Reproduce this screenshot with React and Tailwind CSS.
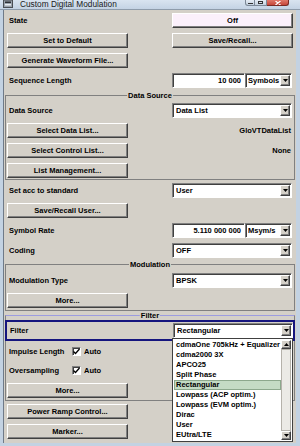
import React from 'react'

const raised = 'border border-t-white border-l-white border-r-[#404040] border-b-[#404040] shadow-[inset_-1px_-1px_0_#808080]'
const sunken = 'border border-t-[#808080] border-l-[#808080] border-r-white border-b-white shadow-[inset_1px_1px_0_#404040]'

function Btn({ children, pink }) {
  return (
    <div className={`w-[121px] h-[15px] flex items-center justify-center ${pink ? 'bg-[#fbf0fb]' : 'bg-[#d4d0c8]'} ${raised}`}>
      {children}
    </div>
  )
}

function Arrow({ up }) {
  return (
    <svg width="5" height="3" viewBox="0 0 5 3">
      <path d={up ? 'M2.5 0L5 3H0z' : 'M0 0h5L2.5 3z'} fill="#000" />
    </svg>
  )
}

function Select({ value, w = 'w-[120px]', pad = 'pl-[3px]' }) {
  return (
    <div className={`${w} h-[15px] bg-white ${sunken} flex items-center ${pad} pr-[1px]`}>
      <span className="flex-1 whitespace-nowrap overflow-hidden">{value}</span>
      <div className={`w-[10px] h-[11px] shrink-0 bg-[#d4d0c8] ${raised} flex items-center justify-center`}>
        <Arrow />
      </div>
    </div>
  )
}

function Field({ value, unit }) {
  return (
    <div className="flex w-[120px] h-[15px]">
      <div className={`w-[73px] h-full bg-white ${sunken} flex items-center justify-end pr-[3px]`}>{value}</div>
      <Select value={unit} w="w-[47px]" pad="pl-[2px]" />
    </div>
  )
}

function Row({ left, right, className = '' }) {
  return (
    <div className={`flex h-[15px] items-center ${className}`}>
      <div className="w-[165px] h-full flex items-center">{left}</div>
      {right}
    </div>
  )
}

const Label = ({ children }) => <span className="pl-[2px] leading-none">{children}</span>

function Group({ title, children, className = '', top = 'border-t-[#808080]' }) {
  return (
    <div className={`relative border border-[#808080] ${top} ${className}`}>
      <span className="absolute left-1/2 -translate-x-1/2 -top-[5px] bg-[#d4d0c8] px-[1px] leading-[9px]">{title}</span>
      {children}
    </div>
  )
}

function Check({ label }) {
  return (
    <div className="flex items-center">
      <div className={`w-[9px] h-[9px] bg-white ${sunken} flex items-center justify-center`}>
        <svg width="7" height="7" viewBox="0 0 7 7">
          <path d="M0.5 3.5L2.5 5.5L6.5 1" fill="none" stroke="#000" strokeWidth="1.3" />
        </svg>
      </div>
      <span className="ml-[3px]">{label}</span>
    </div>
  )
}

function TitleBar() {
  return (
    <div className="h-[10px] flex items-start bg-gradient-to-b from-[#d9e4f0] to-[#c4d3e4] border-b border-[#8e9cab]">
      <svg className="ml-[3px]" width="10" height="8" viewBox="0 0 10 8">
        <rect x="0.5" y="0" width="9" height="7.5" fill="#9aa3ad" stroke="#4a4f55" />
        <rect x="2" y="1.5" width="6" height="1.5" fill="#2d3136" />
        <rect x="2" y="4" width="6" height="1.5" fill="#e8ecf0" />
      </svg>
      <span className="ml-[7px] -mt-[1px] text-[8.3px] leading-[10px] text-[#1a1a1a] font-normal">Custom Digital Modulation</span>
      <div className="flex-1" />
      <div className="flex mr-[11px]">
        <div className="w-[10px] h-[6px] bg-gradient-to-b from-[#e6edf5] to-[#c2cfdd] border border-t-0 border-[#7c8896] rounded-bl-[3px] flex justify-center items-end pb-[1px]">
          <div className="w-[5px] h-[1px] bg-[#333]" />
        </div>
        <div className="w-[12px] h-[6px] bg-gradient-to-b from-[#e6edf5] to-[#c2cfdd] border border-t-0 border-l-0 border-[#7c8896] flex justify-center items-end pb-[1px]">
          <div className="w-[5px] h-[3px] border border-[#333]" />
        </div>
        <div className="w-[22px] h-[6px] bg-gradient-to-b from-[#e0786a] to-[#c5463a] border border-t-0 border-l-0 border-[#7a2a24] rounded-br-[3px] flex justify-center items-end">
          <svg width="6" height="4" viewBox="0 0 6 4">
            <path d="M0.5 0L5.5 4M5.5 0L0.5 4" stroke="#fff" strokeWidth="1.2" />
          </svg>
        </div>
      </div>
    </div>
  )
}

const filters = [
  'cdmaOne 705kHz + Equalizer',
  'cdma2000 3X',
  'APCO25',
  'Split Phase',
  'Rectangular',
  'Lowpass (ACP optim.)',
  'Lowpass (EVM optim.)',
  'Dirac',
  'User',
  'EUtra/LTE',
]

function Dropdown() {
  return (
    <div className="absolute left-[172px] top-[338px] w-[121px] h-[104px] bg-white border border-[#404040] flex font-bold">
      <div className="flex-1 flex flex-col pl-[1px] pt-[1px]">
        {filters.map(f => (
          <div
            key={f}
            className={`h-[10px] flex items-center pl-[2px] whitespace-nowrap ${f === 'Rectangular' ? 'bg-[#c4dbc4] outline outline-1 outline-[#8ca88c] -outline-offset-1' : ''}`}
          >
            {f}
          </div>
        ))}
      </div>
      <div className="w-[10px] flex flex-col py-[1px] mr-[1px]">
        <div className={`h-[9px] bg-[#d4d0c8] ${raised} flex items-center justify-center`}><Arrow up /></div>
        <div className="flex-1 bg-[#ebeae6] border border-[#b5b2ab]" />
        <div className={`h-[9px] bg-[#d4d0c8] ${raised} flex items-center justify-center`}><Arrow /></div>
      </div>
    </div>
  )
}

export default function App() {
  return (
    <div className="relative w-[300px] h-[446px] overflow-hidden bg-[#c3d2e2] font-['Liberation_Sans',Arial,sans-serif] text-[7.5px] text-black">
      <TitleBar />
      <div className="flex h-[436px] pl-[3px] pr-[4px] pb-[3px]">
        <div className="flex-1 bg-[#d4d0c8] border-l border-[#6f7a88] pl-[1px] pr-[1px] pt-[3px] flex flex-col font-bold">
          <Row className="ml-[2px]" left={<Label>State</Label>} right={<Btn pink>Off</Btn>} />
          <Row className="ml-[2px] mt-[5px]" left={<Btn>Set to Default</Btn>} right={<Btn>Save/Recall...</Btn>} />
          <Row className="ml-[2px] mt-[5px]" left={<Btn>Generate Waveform File...</Btn>} />
          <Row className="ml-[2px] mt-[5px]" left={<Label>Sequence Length</Label>} right={<Field value="10 000" unit="Symbols" />} />

          <Group title="Data Source" className="mt-[7px] pt-[7px] pb-[1px]">
            <Row className="ml-[1px]" left={<Label>Data Source</Label>} right={<Select value="Data List" />} />
            <Row className="ml-[1px] mt-[5px]" left={<Btn>Select Data List...</Btn>} right={<span className="w-[120px] text-right pr-[1px]">GloVTDataList</span>} />
            <Row className="ml-[1px] mt-[5px]" left={<Btn>Select Control List...</Btn>} right={<span className="w-[120px] text-right pr-[1px]">None</span>} />
            <Row className="ml-[1px] mt-[5px]" left={<Btn>List Management...</Btn>} />
          </Group>

          <Row className="ml-[2px] mt-[3px]" left={<Label>Set acc to standard</Label>} right={<Select value="User" />} />
          <Row className="ml-[2px] mt-[5px]" left={<Btn>Save/Recall User...</Btn>} />
          <Row className="ml-[2px] mt-[5px]" left={<Label>Symbol Rate</Label>} right={<Field value="5.110 000 000" unit="Msym/s" />} />
          <Row className="ml-[2px] mt-[5px]" left={<Label>Coding</Label>} right={<Select value="OFF" />} />

          <Group title="Modulation" className="mt-[6px] pt-[8px] pb-[2px]">
            <Row className="ml-[1px]" left={<Label>Modulation Type</Label>} right={<Select value="BPSK" />} />
            <Row className="ml-[1px] mt-[5px]" left={<Btn>More...</Btn>} />
          </Group>

          <Group title="Filter" top="border-t-[#9c9ce0]" className="mt-[4px] pt-[4px] pb-[2px]">
            <div className="-mx-[1px] h-[21px] border-2 border-[#15157e] flex items-center">
              <Row className="ml-[1px]" left={<Label>Filter</Label>} right={<Select value="Rectangular" />} />
            </div>
            <div className="ml-[1px] mt-[3px] h-[15px] flex items-center">
              <span className="pl-[2px] w-[65px]">Impulse Length</span>
              <Check label="Auto" />
            </div>
            <div className="ml-[1px] mt-[4px] h-[15px] flex items-center">
              <span className="pl-[2px] w-[65px]">Oversampling</span>
              <Check label="Auto" />
            </div>
            <Row className="ml-[1px] mt-[5px]" left={<Btn>More...</Btn>} />
          </Group>

          <Row className="ml-[2px] mt-[3px]" left={<Btn>Power Ramp Control...</Btn>} />
          <Row className="ml-[2px] mt-[5px]" left={<Btn>Marker...</Btn>} />
        </div>
      </div>
      <Dropdown />
    </div>
  )
}
